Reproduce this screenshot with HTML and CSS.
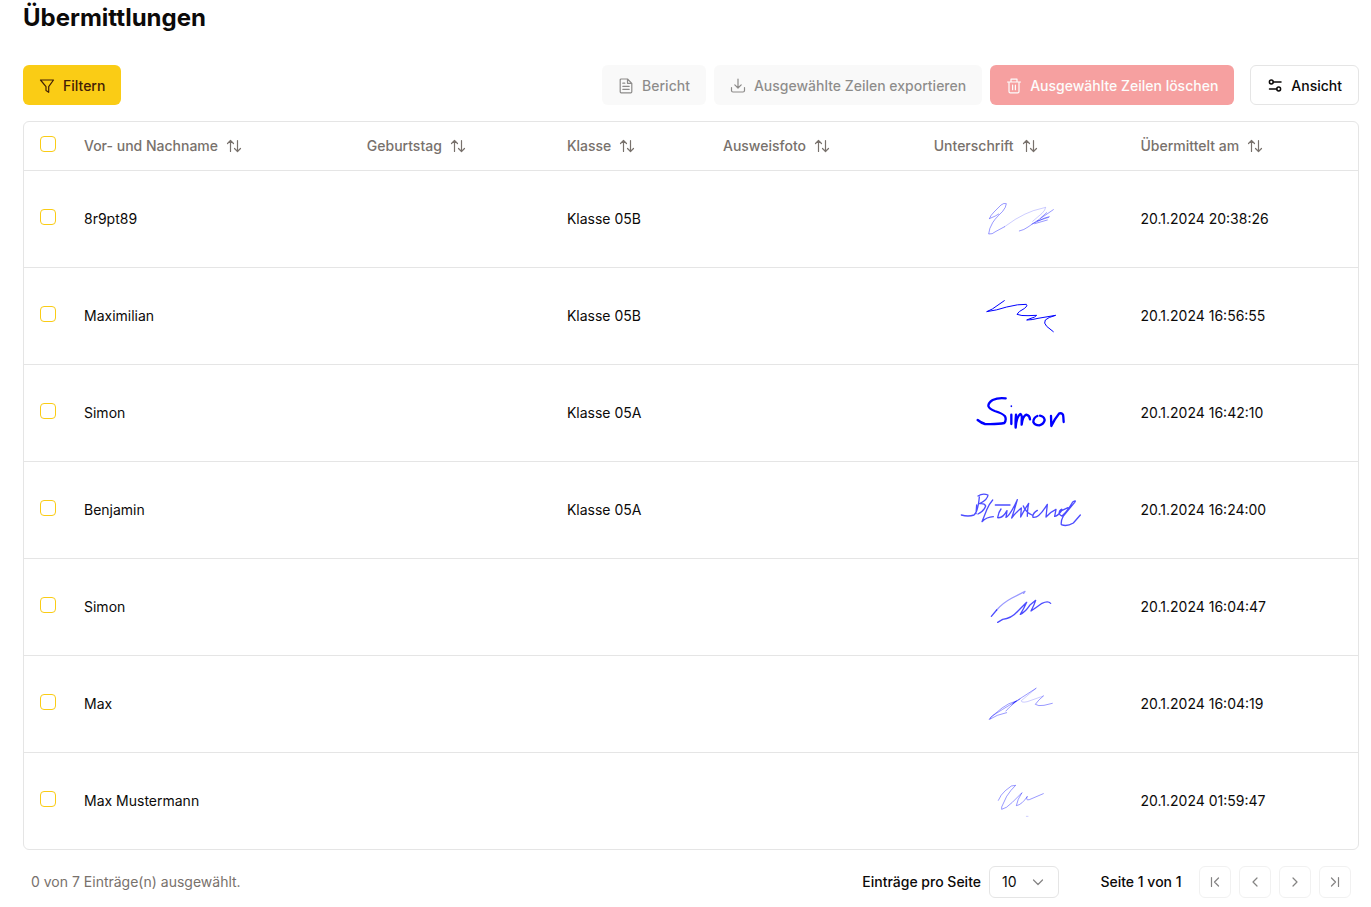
FILE: index.html
```html
<!DOCTYPE html>
<html lang="de">
<head>
    <meta charset="UTF-8">
    <meta name="viewport" content="width=device-width, initial-scale=1.0">
    <title>Übermittlungen</title>
    <link rel="stylesheet" href="styles.css">
</head>
<body>
    <!-- Icons -->
    <svg class="sprite" aria-hidden="true">
        <symbol id="sort" viewBox="0 0 16 16">
            <path d="M4.500 13.500v-11M1.500 5.500l3-3 3 3M11.500 2.500v11M8.500 10.500l3 3 3-3"/>
        </symbol>
        <symbol id="chevron-left" viewBox="0 0 16 16">
            <path d="M10 4 6 8l4 4"/>
        </symbol>
        <symbol id="chevron-right" viewBox="0 0 16 16">
            <path d="M6 4l4 4-4 4"/>
        </symbol>
        <symbol id="first" viewBox="0 0 16 16">
            <path d="M4.500 3.500v9M11.500 4l-4 4 4 4"/>
        </symbol>
        <symbol id="last" viewBox="0 0 16 16">
            <path d="M11.500 3.500v9M4.500 4l4 4-4 4"/>
        </symbol>
    </svg>

    <main class="page">
        <h1>Übermittlungen</h1>

        <div class="toolbar">
            <button class="btn btn-primary">
                <svg class="icon" viewBox="0 0 16 16"><path d="M1.500 2h13L9.700 8.700v5.600L7 12.500V8.700Z"/></svg>
                Filtern
            </button>
            <div class="actions">
                <button class="btn btn-secondary" disabled>
                    <svg class="icon" viewBox="0 0 16 16"><path d="M9.500 1H3.200q-1 0-1 1v11.800q0 1 1 1h9.600q1 0 1-1V5.300ZM9.500 1v4.300h4.300M4.800 5.200h2M4.800 8.300h6.400M4.800 11.300h6.400"/></svg>
                    Bericht
                </button>
                <button class="btn btn-secondary" disabled>
                    <svg class="icon" viewBox="0 0 16 16"><path d="M1.500 9.500v3q0 1.500 1.500 1.500h10q1.500 0 1.500-1.500v-3M8 1v9M4.800 6.800 8 10l3.200-3.200"/></svg>
                    Ausgewählte Zeilen exportieren
                </button>
                <button class="btn btn-danger" disabled>
                    <svg class="icon" viewBox="0 0 16 16"><path d="M1.500 4h13M5 3.800V1.200h6v2.600M3 4v9.500q0 1.300 1.300 1.300h7.400q1.300 0 1.300-1.300V4M6.600 7.200v4.500M9.400 7.200v4.500"/></svg>
                    Ausgewählte Zeilen löschen
                </button>
                <button class="btn btn-outline">
                    <svg class="icon icon-bold" viewBox="0 0 16 16"><circle cx="4.300" cy="4" r="1.900"/><circle cx="11.700" cy="11" r="1.900"/><path d="M6.400 4h7.600M2.500 11h7.200"/></svg>
                    Ansicht
                </button>
            </div>
        </div>

        <div class="table-box">
            <table>
                <colgroup>
                    <col class="col-check">
                    <col class="col-name">
                    <col class="col-birthday">
                    <col class="col-class">
                    <col class="col-photo">
                    <col class="col-signature">
                    <col>
                </colgroup>
                <thead>
                    <tr>
                        <th><input type="checkbox" aria-label="Alle auswählen"></th>
                        <th><button class="sort-btn">Vor- und Nachname <svg class="icon"><use href="#sort"/></svg></button></th>
                        <th><button class="sort-btn">Geburtstag <svg class="icon"><use href="#sort"/></svg></button></th>
                        <th><button class="sort-btn">Klasse <svg class="icon"><use href="#sort"/></svg></button></th>
                        <th><button class="sort-btn">Ausweisfoto <svg class="icon"><use href="#sort"/></svg></button></th>
                        <th><button class="sort-btn">Unterschrift <svg class="icon"><use href="#sort"/></svg></button></th>
                        <th><button class="sort-btn">Übermittelt am <svg class="icon"><use href="#sort"/></svg></button></th>
                    </tr>
                </thead>
                <tbody>
                    <tr>
                        <td><input type="checkbox" aria-label="Zeile auswählen"></td>
                        <td>8r9pt89</td>
                        <td></td>
                        <td>Klasse 05B</td>
                        <td></td>
                        <td>
                            <svg class="signature faint" viewBox="0 -9 426 192">
                                <path d="M118 86 136 78 146 72M119 84Q122 76 132 66L153 45Q162 38 169 41 168 52 158 64L146 76Q134 88 128 98 117 116 116 132 126 134 138 124L164 110"/>
                                <path class="light" d="M164 110 196 88Q226 70 250 62L287 52Q286 60 276 70L248 94"/>
                                <path d="M208 123Q222 120 234 111L310 59M246 102 284 84 298 80M254 101 292 90M272 84 290 68M262 93 296 82"/>
                            </svg>
                        </td>
                        <td>20.1.2024 20:38:26</td>
                    </tr>
                    <tr>
                        <td><input type="checkbox" aria-label="Zeile auswählen"></td>
                        <td>Maximilian</td>
                        <td></td>
                        <td>Klasse 05B</td>
                        <td></td>
                        <td>
                            <svg class="signature" viewBox="0 -9 426 192">
                                <path d="M163 41 127 66 110 74Q140 70 170 60 205 51 229 52 235 55 224 64 204 74 201 82 214 87 234 86L260 85Q256 91 240 95L230 99Q246 99 264 94L317 85Q294 91 286 99 280 108 290 118L310 134"/>
                            </svg>
                        </td>
                        <td>20.1.2024 16:56:55</td>
                    </tr>
                    <tr>
                        <td><input type="checkbox" aria-label="Zeile auswählen"></td>
                        <td>Simon</td>
                        <td></td>
                        <td>Klasse 05A</td>
                        <td></td>
                        <td>
                            <svg class="signature bold" viewBox="0 -9 426 192">
                                <path d="M167 43Q145 40 128 48 115 56 115 66 118 75 134 81 158 88 165 97 170 108 163 117 145 121 105 120 94 117 83 108M184 92V120M198 92Q196 112 197 131 199 98 211 90 217 92 215 109L215 122Q218 96 229 92 239 94 240 106M262 96Q250 101 250 114 254 124 268 124 282 120 284 108 282 97 270 95M303 96 304 126Q314 105 328 88 340 86 340 99L341 114"/>
                                <path class="dot" d="M184 66v1"/>
                            </svg>
                        </td>
                        <td>20.1.2024 16:42:10</td>
                    </tr>
                    <tr>
                        <td><input type="checkbox" aria-label="Zeile auswählen"></td>
                        <td>Benjamin</td>
                        <td></td>
                        <td>Klasse 05A</td>
                        <td></td>
                        <td>
                            <svg class="signature medium" viewBox="0 -9 426 192">
                                <path d="M34 102Q55 108 72 102 84 92 88 48M80 72 78 98M84 45Q98 36 114 42 113 56 89 68 105 66 107 75 102 90 84 99M128 57Q118 68 110 87L96 122Q110 108 130 107M136 72H180M153 84Q145 94 143 110 158 113 171 89 170 98 168 109 180 104 202 56 196 78 185 111 198 94 214 81L212 108Q222 88 236 67 232 86 232 106M220 75Q227 94 246 102M262 88Q246 98 249 109 265 112 286 79L292 70 288 108Q302 92 318 85L314 106Q322 106 334 90 338 79 329 90 324 101 336 105 350 94 368 63 380 56 374 64L340 105Q332 120 334 131 350 138 370 126L391 102M330 91 354 80"/>
                            </svg>
                        </td>
                        <td>20.1.2024 16:24:00</td>
                    </tr>
                    <tr>
                        <td><input type="checkbox" aria-label="Zeile auswählen"></td>
                        <td>Simon</td>
                        <td></td>
                        <td></td>
                        <td></td>
                        <td>
                            <svg class="signature medium" viewBox="0 -9 426 192">
                                <path d="M124 115 140 96"/>
                                <path class="light" d="M140 96Q158 75 186 60L225 40 221 46"/>
                                <path d="M143 133 158 124Q184 122 204 99L230 73Q223 89 211 109 226 102 239 82L257 67Q253 80 243 99 260 88 276 76 294 67 302 76"/>
                            </svg>
                        </td>
                        <td>20.1.2024 16:04:47</td>
                    </tr>
                    <tr>
                        <td><input type="checkbox" aria-label="Zeile auswählen"></td>
                        <td>Max</td>
                        <td></td>
                        <td></td>
                        <td></td>
                        <td>
                            <svg class="signature faint" viewBox="0 -9 426 192">
                                <path d="M118 133 128 122 158 103 199 78 171 104 168 108M199 78Q175 84 156 99L122 127 119 133 142 121 170 113M190 84 258 40M186 88 210 72"/>
                                <path class="light" d="M258 40Q240 55 214 77 214 84 232 80L280 63"/>
                                <path d="M280 63Q266 74 256 88 264 94 282 91L307 85"/>
                            </svg>
                        </td>
                        <td>20.1.2024 16:04:19</td>
                    </tr>
                    <tr>
                        <td><input type="checkbox" aria-label="Zeile auswählen"></td>
                        <td>Max Mustermann</td>
                        <td></td>
                        <td></td>
                        <td></td>
                        <td>
                            <svg class="signature faint" viewBox="0 -9 426 192">
                                <path d="M145 85Q152 68 166 56L184 42 197 40Q182 54 170 73L155 105 155 112Q168 110 187 91L216 62Q202 82 199 101 216 98 232 73 226 86 238 83L280 65"/>
                                <path class="light" d="M229 133h5"/>
                            </svg>
                        </td>
                        <td>20.1.2024 01:59:47</td>
                    </tr>
                </tbody>
            </table>
        </div>

        <div class="footer">
            <p class="selected">0 von 7 Einträge(n) ausgewählt.</p>
            <div class="page-size">
                <label for="pageSize">Einträge pro Seite</label>
                <div class="select">
                    <select id="pageSize">
                        <option>10</option>
                        <option>20</option>
                        <option>50</option>
                    </select>
                    <svg class="icon" viewBox="0 0 16 16"><path d="m3.500 6 4.500 4.500L12.500 6"/></svg>
                </div>
            </div>
            <nav class="pager">
                <span class="page-info">Seite 1 von 1</span>
                <button disabled aria-label="Erste Seite"><svg class="icon"><use href="#first"/></svg></button>
                <button disabled aria-label="Vorherige Seite"><svg class="icon"><use href="#chevron-left"/></svg></button>
                <button disabled aria-label="Nächste Seite"><svg class="icon"><use href="#chevron-right"/></svg></button>
                <button disabled aria-label="Letzte Seite"><svg class="icon"><use href="#last"/></svg></button>
            </nav>
        </div>
    </main>
</body>
</html>
```
FILE: styles.css
```css
* {
    box-sizing: border-box;
}

body {
    margin: 0;
    background: white;
    color: #0c0a09;
    font-family: Inter, sans-serif;
    font-size: 14px;
    line-height: 20px;
}

button,
select {
    font: inherit;
    color: inherit;
}

.sprite {
    display: none;
}

.page {
    padding: 2px 12px 8px 23px;
}

h1 {
    margin: 0 0 31px;
    font-size: 24px;
    line-height: 32px;
    font-weight: 700;
}

.icon {
    width: 16px;
    height: 16px;
    flex: none;
    fill: none;
    stroke: currentColor;
    stroke-width: 1.2;
    stroke-linecap: round;
    stroke-linejoin: round;
}

.icon-bold {
    stroke-width: 1.5;
}

/* Toolbar */
.toolbar,
.actions {
    display: flex;
    align-items: center;
    gap: 8px;
}

.toolbar {
    justify-content: space-between;
    margin-bottom: 16px;
}

.btn {
    display: flex;
    align-items: center;
    gap: 8px;
    height: 40px;
    padding: 1px 16px 0;
    border: none;
    border-radius: 6px;
    font-weight: 500;
    white-space: nowrap;
    cursor: pointer;
}

.btn:disabled {
    opacity: 0.5;
    cursor: default;
}

.btn-primary {
    background: #facc15;
    color: #422006;
}

.btn-secondary {
    background: #f5f5f4;
    color: #1c1917;
}

.btn-danger {
    background: #ef4444;
    color: #fafaf9;
}

.btn-outline {
    margin-left: 8px;
    border: 1px solid #e5e5e5;
    background: white;
}

/* Table */
.table-box {
    border: 1px solid #e5e5e5;
    border-radius: 6px;
}

table {
    width: 100%;
    table-layout: fixed;
    border-collapse: collapse;
}

.col-check {
    width: 44px;
}

.col-name {
    width: 21.2%;
}

.col-birthday {
    width: 15%;
}

.col-class {
    width: 11.7%;
}

.col-photo {
    width: 15.8%;
}

.col-signature {
    width: 15.5%;
}

th,
td {
    padding: 0 16px;
    text-align: left;
}

th {
    height: 48px;
    color: #78716c;
    font-weight: 500;
}

td {
    height: 97px;
}

tr {
    border-bottom: 1px solid #e5e5e5;
}

tbody tr:last-child {
    border-bottom: none;
}

th:first-child,
td:first-child {
    padding-right: 0;
}

input[type="checkbox"] {
    display: block;
    appearance: none;
    width: 16px;
    height: 16px;
    margin: 0 0 4px;
    border: 1px solid #facc15;
    border-radius: 4px;
}

input[type="checkbox"]:checked {
    background: #facc15;
}

.sort-btn {
    display: flex;
    align-items: center;
    gap: 8px;
    padding: 0;
    border: none;
    background: none;
    white-space: nowrap;
    cursor: pointer;
}

.signature {
    display: block;
    width: 142px;
    height: 64px;
    margin: 0 auto;
    fill: none;
    stroke: #0000ff;
    stroke-width: 3;
    stroke-linecap: round;
    stroke-linejoin: round;
}

.signature.bold {
    stroke-width: 7;
}

.signature.bold .dot {
    stroke-width: 5;
}

.signature.medium {
    stroke-width: 4;
    stroke-opacity: 0.7;
}

.signature.faint {
    stroke-opacity: 0.4;
}

.signature .light {
    stroke-opacity: 0.2;
}

.signature.medium .light {
    stroke-opacity: 0.4;
}

/* Footer */
.footer {
    display: flex;
    align-items: center;
    gap: 32px;
    padding: 16px 8px 0;
    font-weight: 500;
}

.selected {
    flex: 1;
    margin: 0;
    color: #78716c;
    font-weight: 400;
}

.page-size,
.pager {
    display: flex;
    align-items: center;
    gap: 8px;
}

.select {
    position: relative;
}

.select select {
    display: block;
    appearance: none;
    width: 70px;
    height: 32px;
    padding: 0 12px;
    border: 1px solid #e5e5e5;
    border-radius: 6px;
    background: white;
    font-weight: 400;
}

.select .icon {
    position: absolute;
    top: 8px;
    right: 13px;
    color: #858483;
    pointer-events: none;
}

.page-info {
    width: 100px;
    text-align: center;
}

.pager button {
    display: grid;
    place-items: center;
    width: 32px;
    height: 32px;
    padding: 0;
    border: 1px solid #e5e5e5;
    border-radius: 6px;
    background: white;
}

.pager button:disabled {
    opacity: 0.5;
}
```
